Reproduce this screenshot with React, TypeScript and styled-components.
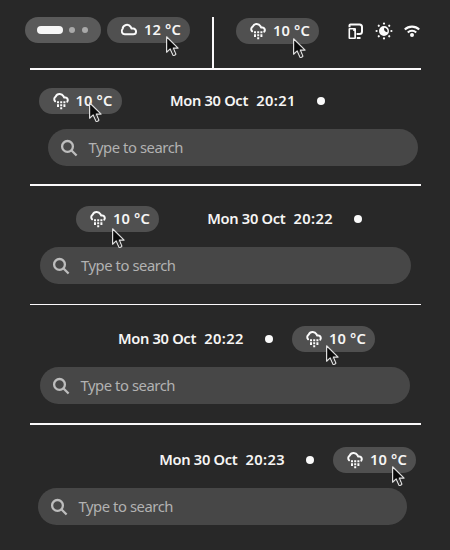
import React from "react";
import styled, { createGlobalStyle } from "styled-components";

const GlobalStyle = createGlobalStyle`
  body { margin: 0; background: #282828; }
  * { box-sizing: border-box; }
`;

const Page = styled.main`
  width: 450px;
  height: 550px;
  overflow: hidden;
  background: #282828;
  color: #f6f5f4;
  font-family: "Noto Sans", sans-serif;
  display: flex;
  flex-direction: column;
`;

const TopBar = styled.section`
  height: 68px;
  flex: none;
  display: flex;
  align-items: flex-start;
  padding: 17px 0 0 25px;
`;

const Divider = styled.div<{ $thin?: boolean }>`
  flex: none;
  width: 391px;
  height: ${(p) => (p.$thin ? 1 : 2)}px;
  margin-left: 30px;
  background: #fbf9fb;
`;

const VerticalRule = styled.div`
  width: 2px;
  height: 51px;
  margin: 0 22px;
  background: #fbf9fb;
`;

const Workspaces = styled.div`
  width: 76px;
  height: 26px;
  margin-right: 6px;
  padding-left: 12px;
  border-radius: 13px;
  background: #5a5a5a;
  display: flex;
  align-items: center;
  gap: 7px;
`;

const ActiveWorkspace = styled.span`
  width: 26px;
  height: 8px;
  margin-right: -1px;
  border-radius: 4px;
  background: #f6f6f6;
`;

const WorkspaceDot = styled.span`
  width: 6px;
  height: 6px;
  border-radius: 50%;
  background: #a9a9a9;
`;

const Pill = styled.div<{ $drop?: number }>`
  position: relative;
  flex: none;
  width: 83px;
  height: 26px;
  margin-top: ${(p) => p.$drop ?? 0}px;
  padding-left: 14px;
  border-radius: 13px;
  background: #505050;
  display: flex;
  align-items: center;
  gap: 7px;
`;

const Label = styled.span`
  flex: none;
  font-size: 14.67px;
  font-weight: 600;
  line-height: 24px;
  padding-bottom: 2px;
  white-space: pre;
`;

const Temperature = styled(Label)`
  letter-spacing: 0.15px;
`;

const DateText = styled(Label)`
  width: 86.3px;
  letter-spacing: -0.32px;
`;

const TimeText = styled(Label)`
  width: 39.7px;
  letter-spacing: 0.35px;
`;

const Glyph = styled.svg`
  flex: none;
  display: block;
  overflow: visible;
`;

const Pointer = styled.svg<{ $x: number; $y: number }>`
  position: absolute;
  z-index: 1;
  left: ${(p) => p.$x}px;
  top: ${(p) => p.$y}px;
  overflow: visible;
`;

const Tray = styled.div`
  display: flex;
  align-items: center;
  gap: 12px;
  height: 28px;
  margin-left: 29px;
`;

const Sample = styled.section<{ $height: number; $top: number }>`
  flex: none;
  height: ${(p) => p.$height}px;
  padding-top: ${(p) => p.$top}px;
`;

const PanelRow = styled.div<{ $left: number; $gap: number }>`
  display: flex;
  align-items: center;
  height: 26px;
  gap: ${(p) => p.$gap}px;
  padding-left: ${(p) => p.$left}px;
`;

const Clock = styled.div`
  display: flex;
  align-items: center;
`;

const Notice = styled.span`
  width: 8px;
  height: 8px;
  margin-left: 21px;
  border-radius: 50%;
  background: #fafafa;
`;

const Search = styled.div<{ $left: number; $width: number }>`
  display: flex;
  align-items: center;
  gap: 12px;
  width: ${(p) => p.$width}px;
  height: 37px;
  margin: 15px 0 0 ${(p) => p.$left}px;
  padding-left: 13px;
  border-radius: 18.5px;
  background: #474747;
`;

const Placeholder = styled.span`
  font-size: 14.8px;
  line-height: 37px;
  letter-spacing: -0.44px;
  color: #b2b2b2;
  white-space: nowrap;
`;

function CloudIcon() {
  return (
    <Glyph width="16" height="16" viewBox="0 0 16 16" fill="none" stroke="#fafafa" strokeWidth="2">
      <path d="M4.2 12.3A3.2 3.2 0 0 1 1.6 6.9A4.4 4.4 0 0 1 9.7 4.9L10.5 6.6H12.2A2.8 2.8 0 0 1 12.2 12.3Z" strokeLinejoin="round" />
    </Glyph>
  );
}

function ShowersIcon() {
  return (
    <Glyph width="16" height="16" viewBox="0 0 16 16" fill="none">
      <path
        d="M2.1 8.3A3 3 0 0 1 2.7 3.6A4.4 4.4 0 0 1 10.5 3.2L11.2 4.6H12.4A2.5 2.5 0 0 1 14.3 8.6"
        stroke="#fafafa"
        strokeWidth="2"
        strokeLinecap="round"
        strokeLinejoin="round"
      />
      <path
        d="M4 8.2h2v2H4zM7.2 8.2h2v2h-2zM10.4 8.2h2v2h-2zM4 11.2h2v2.8H4zM7.2 11.2h2v2h-2zM10.4 11.2h2v2.8h-2zM7.2 14.2h2v2h-2z"
        fill="#fafafa"
      />
    </Glyph>
  );
}

function DevicesIcon() {
  return (
    <Glyph width="16" height="16" viewBox="0 0 16 16">
      <path
        d="M1.5 4.3V2.3Q1.5 1.5 2.5 1.5H11.5Q14 1.5 14 4V8.5Q14 11 11.5 11H8.6"
        fill="none"
        stroke="#fafafa"
        strokeWidth="2"
      />
      <path d="M8.8 14h3.7v2H8.8z" fill="#fafafa" />
      <path
        fillRule="evenodd"
        d="M1.5 5h5.5a1 1 0 0 1 1 1v9a1 1 0 0 1-1 1H1.5a1 1 0 0 1-1-1V6a1 1 0 0 1 1-1zm.6 1.6v7.8h4.2V8H5.2V6.6z"
        fill="#fafafa"
      />
    </Glyph>
  );
}

function NightLightIcon() {
  const rays = [0, 45, 90, 135, 180, 225, 270, 315];
  return (
    <Glyph width="16" height="16" viewBox="0 0 16 16" fill="#fafafa">
      <path fillRule="evenodd" d="M8 3a5 5 0 1 1 0 10A5 5 0 0 1 8 3zM8.3 4.7a3.3 3.3 0 0 0 3 4.6A3.4 3.4 0 0 0 8.3 4.7z" />
      {rays.map((angle) => (
        <circle key={angle} cx="8" cy="0.6" r="1.1" transform={`rotate(${angle} 8 8)`} />
      ))}
    </Glyph>
  );
}

function WifiIcon() {
  return (
    <Glyph width="16" height="16" viewBox="0 0 16 16" fill="none" stroke="#fafafa" strokeWidth="2.1">
      <path d="M0.8 6.6A10.2 10.2 0 0 1 15.2 6.6M3.8 9.5A6 6 0 0 1 12.2 9.5" />
      <circle cx="8" cy="12" r="2" fill="#fafafa" stroke="none" />
    </Glyph>
  );
}

function SearchIcon() {
  return (
    <Glyph width="16" height="16" viewBox="0 0 16 16" fill="none" stroke="#bdbdbd" strokeWidth="2.3">
      <circle cx="6.5" cy="6.4" r="5.4" />
      <path d="M10.3 10.2L15.6 15.5" />
    </Glyph>
  );
}

function Cursor({ x, y }: { x: number; y: number }) {
  return (
    <Pointer $x={x} $y={y} width="13" height="21" viewBox="0 0 13 21">
      <path
        d="M0.6 0.8V16.2L4.2 12.9L7 19.3Q8.4 20 9.9 18.2L7.3 12.1H12.1Z"
        fill="#0c0c0c"
        stroke="#dedede"
        strokeWidth="1.2"
        strokeLinejoin="round"
      />
      <path d="M5.2 12.9L7.6 18.3L8.8 17.7L6.5 12.3Z" fill="#3a3a3a" />
    </Pointer>
  );
}

interface WeatherProps {
  cursorX: number;
  cursorY: number;
  value?: string;
  cloudy?: boolean;
  drop?: number;
}

function Weather({ cursorX, cursorY, value = "10 °C", cloudy, drop }: WeatherProps) {
  return (
    <Pill $drop={drop}>
      {cloudy ? <CloudIcon /> : <ShowersIcon />}
      <Temperature>{value}</Temperature>
      <Cursor x={cursorX} y={cursorY} />
    </Pill>
  );
}

function DateClock({ time }: { time: string }) {
  return (
    <Clock>
      <DateText>Mon 30 Oct</DateText>
      <TimeText>{time}</TimeText>
      <Notice />
    </Clock>
  );
}

function SearchField({ left, width }: { left: number; width: number }) {
  return (
    <Search $left={left} $width={width}>
      <SearchIcon />
      <Placeholder>Type to search</Placeholder>
    </Search>
  );
}

export default function App() {
  return (
    <Page>
      <GlobalStyle />
      <TopBar>
        <Workspaces>
          <ActiveWorkspace />
          <WorkspaceDot />
          <WorkspaceDot />
        </Workspaces>
        <Weather value="12 °C" cloudy cursorX={59} cursorY={19} />
        <VerticalRule />
        <Weather drop={1} cursorX={57} cursorY={20} />
        <Tray>
          <DevicesIcon />
          <NightLightIcon />
          <WifiIcon />
        </Tray>
      </TopBar>
      <Divider />
      <Sample $height={114} $top={18}>
        <PanelRow $left={38.5} $gap={48.5}>
          <Weather cursorX={50} cursorY={13.5} />
          <DateClock time="20:21" />
        </PanelRow>
        <SearchField left={47.5} width={370.5} />
      </Sample>
      <Divider />
      <Sample $height={118} $top={20}>
        <PanelRow $left={76} $gap={48.3}>
          <Weather cursorX={36} cursorY={22} />
          <DateClock time="20:22" />
        </PanelRow>
        <SearchField left={40} width={371} />
      </Sample>
      <Divider $thin />
      <Sample $height={118} $top={21}>
        <PanelRow $left={118} $gap={19}>
          <DateClock time="20:22" />
          <Weather cursorX={34} cursorY={19} />
        </PanelRow>
        <SearchField left={39.5} width={370.5} />
      </Sample>
      <Divider />
      <Sample $height={125} $top={22}>
        <PanelRow $left={159.3} $gap={18.7}>
          <DateClock time="20:23" />
          <Weather cursorX={59} cursorY={19} />
        </PanelRow>
        <SearchField left={37.5} width={369.5} />
      </Sample>
    </Page>
  );
}
